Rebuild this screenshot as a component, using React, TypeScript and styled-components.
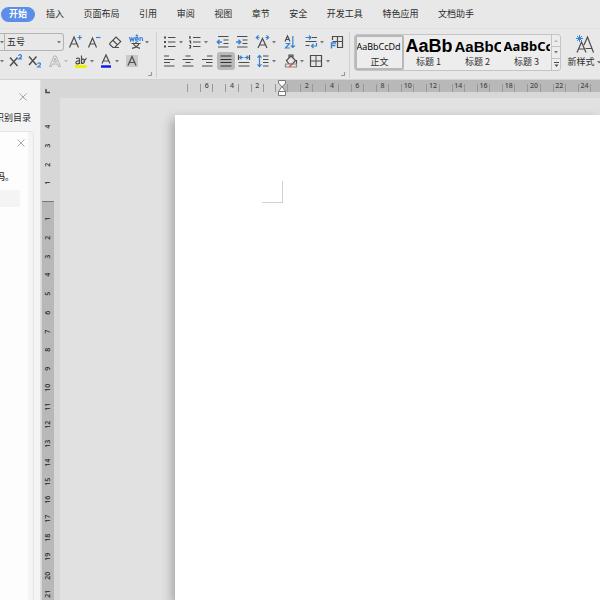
import React from "react";
import styled, { createGlobalStyle, css } from "styled-components";

const INK = "#4c4c4c";
const BLUE = "#3583d6";
const CHROME = "#e8e8e8";

const GlobalStyle = createGlobalStyle`
  * { box-sizing: border-box; }
  body {
    margin: 0;
    overflow: hidden;
    background: ${CHROME};
    color: #2c2c2c;
    font: 9px/12px "Noto Sans CJK SC", "Noto Sans", sans-serif;
  }
  button, select { font: inherit; color: inherit; }
`;

const Window = styled.div`
  display: flex;
  flex-direction: column;
  height: 100vh;
`;

const plainButton = css`
  border: 0;
  padding: 0;
  background: none;
  cursor: pointer;
  white-space: nowrap;
`;

/* ---------- tab strip ---------- */

const TabStrip = styled.header`
  display: flex;
  align-items: center;
  flex: none;
  height: 28px;
  padding-left: 1px;
`;

const ActiveTab = styled.button`
  ${plainButton}
  flex: none;
  width: 34px;
  height: 15px;
  margin-right: 11px;
  border-radius: 8px;
  background: #5b8ee8;
  color: #fff;
  font-weight: 700;
`;

const TabList = styled.nav`
  display: flex;
  justify-content: space-between;
  flex: none;
  width: 428px;
`;

const Tab = styled.button`
  ${plainButton}
`;

/* ---------- ribbon ---------- */

const Ribbon = styled.div`
  display: flex;
  flex: none;
  height: 52px;
  border-top: 1px solid #e1e1e1;
  border-bottom: 1px solid #d2d2d2;
  overflow: hidden;
`;

const Group = styled.section<{ $width: number; $inset?: number }>`
  display: flex;
  flex-direction: column;
  flex: none;
  gap: 1px;
  width: ${(p) => p.$width}px;
  padding: 4px 3px 0 ${(p) => p.$inset ?? 0}px;
`;

const Divider = styled.div`
  flex: none;
  width: 1px;
  height: 46px;
  margin-top: 3px;
  background: #d0d0d0;
`;

const ToolRow = styled.div`
  display: flex;
  align-items: center;
  height: 18px;
`;

const Tool = styled.button<{ $gap?: number; $on?: boolean }>`
  ${plainButton}
  display: flex;
  align-items: center;
  justify-content: center;
  flex: none;
  width: ${(p) => (p.$on ? 18 : 16)}px;
  height: 18px;
  margin-left: ${(p) => p.$gap ?? 0}px;
  border-radius: 3px;
  background: ${(p) => (p.$on ? "#b9b9b9" : "none")};
`;

const Drop = styled.button<{ $gap?: number; $narrow?: boolean }>`
  ${plainButton}
  display: flex;
  align-items: center;
  justify-content: center;
  flex: none;
  width: ${(p) => (p.$narrow ? 4 : 6)}px;
  height: 18px;
  margin-left: ${(p) => p.$gap ?? 0}px;
`;

const LauncherRow = styled.div`
  display: flex;
  justify-content: flex-end;
`;

const Launcher = styled.button`
  ${plainButton}
  width: 5px;
  height: 6px;
  display: flex;
`;

const FontName = styled.div`
  flex: none;
  width: 5px;
  height: 18px;
  display: flex;
  align-items: center;
  border: solid #b4b4b4;
  border-width: 1px 1px 1px 0;
`;

const SizeBox = styled.label`
  display: grid;
  flex: none;
  align-items: center;
  width: 59px;
  height: 18px;
  border: 1px solid #b4b4b4;
  border-left: 0;
  border-radius: 0 3px 3px 0;
  > * { grid-area: 1 / 1; }
  > svg { justify-self: end; margin-right: 2px; pointer-events: none; }
`;

const SizeSelect = styled.select`
  appearance: none;
  width: 100%;
  height: 16px;
  padding: 0 0 0 2px;
  border: 0;
  background: none;
`;

/* ---------- style gallery ---------- */

const Gallery = styled.div`
  display: flex;
  flex: none;
  height: 37px;
  margin: 5px 0 0 4px;
  border: 1px solid #c4c4c4;
  border-radius: 3px;
  background: #ededed;
`;

const StyleCard = styled.button<{ $on?: boolean }>`
  ${plainButton}
  display: flex;
  flex-direction: column;
  align-items: center;
  width: 49px;
  height: 35px;
  padding: ${(p) => (p.$on ? 0 : 2)}px;
  border: ${(p) => (p.$on ? "2px solid #b8b8b8" : "0")};
  border-radius: 2px;
`;

const Preview = styled.span<{ $size: number; $bold?: boolean; $face: string }>`
  width: 46px;
  height: 20px;
  overflow: hidden;
  text-align: left;
  color: #000;
  font: ${(p) => (p.$bold ? 700 : 400)} ${(p) => p.$size}px/19px ${(p) => p.$face}, sans-serif;
`;

const GallerySteps = styled.div`
  display: flex;
  flex-direction: column;
  width: 9px;
  border-left: 1px solid #c4c4c4;
`;

const Step = styled.button`
  ${plainButton}
  display: flex;
  align-items: center;
  justify-content: center;
  flex: 1;
  & + & { border-top: 1px solid #c4c4c4; }
`;

const NewStyle = styled.button`
  ${plainButton}
  display: grid;
  grid-template-columns: 28px 8px;
  row-gap: 2px;
  justify-items: center;
  align-items: center;
  align-content: start;
  margin: 5px 0 0 6px;
  > :first-child { grid-column: 1 / 3; }
`;

/* ---------- workspace ---------- */

const Body = styled.div`
  display: flex;
  flex: 1;
  min-height: 0;
`;

const SidePane = styled.aside`
  display: flex;
  flex-direction: column;
  align-items: flex-end;
  flex: none;
  width: 40px;
  overflow: hidden;
  background: #f4f4f4;
`;

const PaneClose = styled.button<{ $card?: boolean }>`
  ${plainButton}
  display: flex;
  flex: none;
  margin: ${(p) => (p.$card ? "7px 3px 0 0" : "13px 13px 0 0")};
`;

const PaneTitle = styled.div`
  flex: none;
  margin: 11px 9px 7px 0;
  white-space: nowrap;
`;

const PaneFrame = styled.div`
  flex: 1;
  width: 60px;
  padding-right: 5px;
  border: 1px solid #e6e6e6;
  border-bottom: 0;
  border-radius: 4px 4px 0 0;
  margin-right: 6px;
`;

const PaneCard = styled.div`
  display: flex;
  flex-direction: column;
  align-items: flex-end;
  height: 100%;
  background: #fdfdfd;
`;

const Message = styled.p`
  margin: 24px 14px 7px 0;
  font-weight: 500;
  white-space: nowrap;
`;

const Placeholder = styled.div`
  width: 50px;
  height: 17px;
  margin-right: 8px;
  border-radius: 3px;
  background: #f4f4f4;
`;

const Workspace = styled.main`
  display: flex;
  flex-direction: column;
  flex: 1;
  min-width: 0;
  border-left: 1px solid #dedede;
  background: #d7d7d7;
`;

const TopRuler = styled.div`
  display: flex;
  flex: none;
  height: 18px;
  overflow: hidden;
  color: #444;
  font: 500 7px/11px "Noto Sans", sans-serif;
`;

const Corner = styled.button`
  ${plainButton}
  display: flex;
  flex: none;
  align-items: center;
  width: 20px;
  height: 18px;
  padding: 4px 0 0 4px;
`;

const MarginBand = styled.div`
  display: flex;
  flex: none;
  justify-content: flex-end;
  width: 221px;
  height: 12px;
`;

const TextBand = styled.div`
  display: flex;
  flex: 1 0 auto;
  height: 12px;
  background: #b8b8b8;
`;

const Scale = styled.div<{ $length: number }>`
  display: flex;
  flex: none;
  width: ${(p) => p.$length}px;
`;

const Unit = styled.span`
  display: flex;
  flex: 1;
  justify-content: space-between;
  width: 0;
  padding: 0 6px;
`;

const Numeral = styled.span`
  display: flex;
  justify-content: center;
  width: 0;
`;

const Tick = styled.i<{ $edge?: boolean }>`
  flex: none;
  width: 1px;
  height: 8px;
  margin: 4px ${(p) => (p.$edge ? 6 : 0)}px 0 ${(p) => (p.$edge ? 5 : 0)}px;
  background: #999;
`;

const IndentMarker = styled.button`
  ${plainButton}
  display: flex;
  flex: none;
  width: 8px;
  height: 17px;
  margin: 0 -4px;
  z-index: 1;
`;

const Stage = styled.div`
  display: flex;
  flex: 1;
  min-height: 0;
`;

const SideRuler = styled.div`
  display: flex;
  flex-direction: column;
  flex: none;
  width: 13px;
  margin-right: 6px;
  padding: 19px 0 0 1px;
  overflow: hidden;
  color: #222;
  font: 500 7px/12px "Noto Sans", sans-serif;
`;

const SideScale = styled.div<{ $length: number; $text?: boolean }>`
  display: flex;
  flex-direction: column;
  flex: none;
  height: ${(p) => p.$length}px;
  ${(p) =>
    p.$text
      ? css`
          margin-top: 9px;
          padding-top: 7px;
          border-top: 1px solid #777;
          background: #b8b8b8;
        `
      : ""}
`;

const SideNumeral = styled.span`
  display: flex;
  align-items: center;
  justify-content: center;
  flex: 1;
  height: 0;
  writing-mode: vertical-rl;
  transform: rotate(180deg);
`;

const Canvas = styled.div`
  display: flex;
  flex: 1;
  min-width: 0;
  padding: 17px 0 0 115px;
  overflow: hidden;
  background: #e1e1e1;
`;

const Page = styled.article`
  flex: 1;
  padding: 66px 0 0 87px;
  background: #fff;
  box-shadow: -3px 4px 10px rgba(0, 0, 0, 0.28);
`;

const MarginCorner = styled.div`
  width: 21px;
  height: 22px;
  border: solid #d0d0d0;
  border-width: 0 1px 1px 0;
`;

/* ---------- icons ---------- */

const Svg = ({ w = 16, h = 16, children }: { w?: number; h?: number; children: React.ReactNode }) => (
  <svg width={w} height={h} viewBox={`0 0 ${w} ${h}`} fill="none" stroke={INK} strokeWidth="1.2" aria-hidden="true">
    {children}
  </svg>
);

const Caret = ({ pale = false }: { pale?: boolean }) => (
  <svg width="4" height="3" viewBox="0 0 4 3" aria-hidden="true">
    <path d="M0 0h4L2 2.6z" fill={pale ? "#bbb" : "#777"} />
  </svg>
);

const icons = {
  grow: (
    <Svg>
      <path d="M2.5 13.5 7 3l4.5 10.500M4 10h6" />
      <path d="M10.5 3.5H15M12.7 1.300v4.400" stroke={BLUE} />
    </Svg>
  ),
  shrink: (
    <Svg>
      <path d="M2.500 13.500 6.500 4l4 9.500M4 10h5" />
      <path d="M10 3.500h4.500" stroke={BLUE} />
    </Svg>
  ),
  eraser: (
    <Svg>
      <path d="M2.800 9.300 9 3l4.700 4.600-6 5.900H6L2.800 10.400zM5.800 6.200l4.800 4.700M7 13.500h5" />
    </Svg>
  ),
  phonetic: (
    <Svg>
      <path
        d="M1.500 3l1.200 4 1.200-3 1.200 3 1.200-4M7.500 5.200h2.800c0-2.800-2.800-2.800-2.800 0 0 2.300 2.200 2.300 2.700 1.400M12 7V3.200M12 5c0-2 2.500-2 2.500 0v2M7.800 2l1-1 1 1"
        stroke={BLUE}
      />
      <path d="M3.500 9.500h9M8 8v1.500M5.500 9.700C6.500 12 9 13.500 12 14.300M10.800 9.700C10 12 7.500 13.500 4 14.300" />
    </Svg>
  ),
  superscript: (
    <Svg>
      <path d="M3 4.500 10.500 13M10.500 4.500 3 13" strokeWidth="1.400" />
      <path d="M11.700 3c0-2 3-1.600 2.800.1-.1 1-1.800 1.600-2.800 2.700H15" stroke={BLUE} />
    </Svg>
  ),
  subscript: (
    <Svg>
      <path d="M3 3.500 10.500 12M10.500 3.500 3 12" strokeWidth="1.400" />
      <path d="M11.700 11.200c0-2 3-1.600 2.800.1-.1 1-1.800 1.600-2.800 2.700H15" stroke={BLUE} />
    </Svg>
  ),
  outlineA: (
    <Svg>
      <path d="M2.500 13.500 7 3h2l4.500 10.500h-2l-1-2.500h-5l-1 2.500zM6.500 9h3L8 5z" stroke="#b5b5b5" strokeWidth="1" />
    </Svg>
  ),
  highlight: (
    <Svg>
      <path d="M3 5.500c3-1 3.500 0 3.500 1.500v4M6.500 8C4 7.700 2.700 8.500 3 10c.4 1.300 2.800 1 3.500-.6M8.500 2.500V11M8.500 7c1-1.500 3-1.300 3 1s-2 3-3 1.600M10.500 9l3-4" />
      <path d="M2 13.500h11.500" stroke="#efef00" strokeWidth="3" />
    </Svg>
  ),
  fontColor: (
    <Svg>
      <path d="M4 10.500 8 2l4 8.500M5.200 8h5.600" />
      <path d="M3 13.500h10" stroke="#1010f0" strokeWidth="2.400" />
    </Svg>
  ),
  shadedA: (
    <Svg>
      <path d="M2 2h12v12H2z" fill="#c9c9c9" stroke="none" />
      <path d="M4 12.500 8 3.500l4 9M5.500 9.500h5" />
    </Svg>
  ),
  bullets: (
    <Svg>
      <path d="M6 3.500h7.500M6 8h7.500M6 12.500h7.500" />
      <path d="M2 3.500h2M2 8h2M2 12.500h2" strokeWidth="2" />
    </Svg>
  ),
  numbering: (
    <Svg>
      <path d="M6 3.500h7.500M6 8h7.500M6 12.500h7.500" />
      <path d="M3 2v3M2 3h1M2 7h1.500v2H4.500M2 11.500h1.500V14H2" />
    </Svg>
  ),
  outdent: (
    <Svg>
      <path d="M3 2.500h10.500M8.500 6h5M8.500 9.500h5M3 13h10.500" />
      <path d="M7 8H2M4.500 5.800 2.300 8l2.200 2.200" stroke={BLUE} strokeWidth="1.400" />
    </Svg>
  ),
  indent: (
    <Svg>
      <path d="M3 2.500h10.500M8.500 6h5M8.500 9.500h5M3 13h10.500" />
      <path d="M2 8h5M4.500 5.800 6.700 8l-2.200 2.200" stroke={BLUE} strokeWidth="1.400" />
    </Svg>
  ),
  scaleA: (
    <Svg>
      <path d="M4 14 8.500 4.500 13 14M5.500 11h6" />
      <path d="M5.500 3.500h-3M4.500 1.300 2.300 3.500l2.200 2.200M11.500 3.500h3M12.500 1.300l2.200 2.200-2.200 2.200" stroke={BLUE} />
    </Svg>
  ),
  sort: (
    <Svg>
      <path d="M3 7.500 5.500 2 8 7.500M4 5.500h3" />
      <path d="M3.500 9.500h4L3.500 14H8M10.800 2v11.500M8.800 11.500l2 2 2-2" stroke={BLUE} />
    </Svg>
  ),
  wrap: (
    <Svg>
      <path d="M9 3.500h5M2.500 7.500h11M2.500 11.500h4" />
      <path d="M2.500 3.500h5M6 1.500l2 2-2 2M13.500 9v3h-5M10.500 10l-2 2 2 2" stroke={BLUE} />
    </Svg>
  ),
  frame: (
    <Svg>
      <path d="M3.500 6V2.500h10v11H8M8.500 2.500v11M3.500 7.500h10" />
      <path d="M2.500 14.500V9H7M2.500 11.500h4" stroke={BLUE} strokeWidth="1.400" />
    </Svg>
  ),
  left: (
    <Svg>
      <path d="M3 3h5M3 6.500h10.500M3 9.500h6M3 13h10.500" />
    </Svg>
  ),
  center: (
    <Svg>
      <path d="M5.500 3h5M2.500 6.500h11M5.500 9.500h5M2.500 13h11" />
    </Svg>
  ),
  right: (
    <Svg>
      <path d="M8 3h5.500M3 6.500h10.500M7 9.500h6.500M3 13h10.500" />
    </Svg>
  ),
  justify: (
    <Svg>
      <path d="M2.500 3h11M2.500 6.500h11M2.500 9.500h11M2.500 13h11" stroke="#333" />
    </Svg>
  ),
  distribute: (
    <Svg>
      <path d="M2.500 2v5M13.500 2v5M2.500 9.500h11M2.500 13h11" />
      <path d="M3.500 4.500h4M5.500 2.800 3.700 4.500l1.800 1.700M8.500 4.500h4M10.500 2.800l1.800 1.700-1.800 1.700" stroke={BLUE} />
    </Svg>
  ),
  spacing: (
    <Svg>
      <path d="M8 3h5.500M8 6.500h5.500M8 9.500h5.500M8 13h5.500" />
      <path d="M4.500 2.500v11M2.500 4.700l2-2.200 2 2.200M2.500 11.300l2 2.200 2-2.200" stroke={BLUE} />
    </Svg>
  ),
  bucket: (
    <Svg>
      <path d="M3.500 7.500 8 3l4.500 4.500-3 3.500H6zM6 5V2h4v3M13.500 7v4" />
      <path d="M5 11H2.500v3h11v-3H10" stroke="#888" />
      <path d="M6 14l4-3.500" stroke="#e04b4b" />
    </Svg>
  ),
  borders: (
    <Svg>
      <path d="M2.500 2.500h11v11h-11z" />
      <path d="M8 2.500v11M2.500 8h11" strokeWidth="1" />
    </Svg>
  ),
  launcher: (
    <Svg w={5} h={6}>
      <path d="M0 4.500h3.500V1" stroke="#999" />
    </Svg>
  ),
  close: (
    <Svg w={8} h={8}>
      <path d="M.5.500l7 7M7.500.500l-7 7" stroke="#a8a8a8" strokeWidth="1" />
    </Svg>
  ),
  newStyle: (
    <Svg w={22} h={20}>
      <path d="M3 18.500 7.500 8 12 18.500M4.500 15h6M10 11l3.500-8 6 15.500M11.500 14.500H18" />
      <path d="M5.500 1v7M2 4.500h7M3 2l5 5M8 2 3 7" stroke={BLUE} strokeWidth="1" />
    </Svg>
  ),
  tabStop: (
    <Svg w={5} h={5}>
      <path d="M1 0v3.500h4" strokeWidth="1.600" />
    </Svg>
  ),
  marker: (
    <Svg w={8} h={17}>
      <path d="M.5.500h7V3L4 7 .5 3z" fill="#fff" stroke="#777" strokeWidth="1" />
      <path d="M.5 11.500 4 6.500l3.500 5v4h-7zM.5 11.500h7" fill="#fff" stroke="#777" strokeWidth="1" />
    </Svg>
  ),
};

type IconName = keyof typeof icons;
type ToolSpec = { icon: IconName; label: string; gap?: number; on?: boolean; drop?: number; pale?: boolean };

const Tools = ({ items }: { items: ToolSpec[] }) => (
  <>
    {items.map((t) => (
      <React.Fragment key={t.icon}>
        <Tool $gap={t.gap} $on={t.on} aria-label={t.label} aria-pressed={t.on}>
          {icons[t.icon]}
        </Tool>
        {t.drop !== undefined && (
          <Drop $gap={t.drop} aria-label={`${t.label}选项`}>
            <Caret pale={t.pale} />
          </Drop>
        )}
      </React.Fragment>
    ))}
  </>
);

const fontTop: ToolSpec[] = [
  { icon: "grow", label: "增大字号", gap: 3 },
  { icon: "shrink", label: "减小字号", gap: 3 },
  { icon: "eraser", label: "清除格式", gap: 5 },
  { icon: "phonetic", label: "拼音指南", gap: 5, drop: 0 },
];
const fontBottom: ToolSpec[] = [
  { icon: "superscript", label: "上标", gap: 3 },
  { icon: "subscript", label: "下标", gap: 3 },
  { icon: "outlineA", label: "文字效果", gap: 5, drop: 0, pale: true },
  { icon: "highlight", label: "突出显示", gap: 4, drop: 0 },
  { icon: "fontColor", label: "字体颜色", gap: 3, drop: 0 },
  { icon: "shadedA", label: "字符底纹", gap: 4 },
];
const paraTop: ToolSpec[] = [
  { icon: "bullets", label: "项目符号", gap: 1, drop: 0 },
  { icon: "numbering", label: "编号", gap: 3, drop: 0 },
  { icon: "outdent", label: "减少缩进量", gap: 6 },
  { icon: "indent", label: "增加缩进量", gap: 3 },
  { icon: "scaleA", label: "中文版式", gap: 4, drop: 1 },
  { icon: "sort", label: "排序", gap: 5 },
  { icon: "wrap", label: "显示编辑标记", gap: 5, drop: 0 },
  { icon: "frame", label: "制表位", gap: 4 },
];
const paraBottom: ToolSpec[] = [
  { icon: "left", label: "左对齐" },
  { icon: "center", label: "居中对齐", gap: 3 },
  { icon: "right", label: "右对齐", gap: 3 },
  { icon: "justify", label: "两端对齐", gap: 2, on: true },
  { icon: "distribute", label: "分散对齐", gap: 1 },
  { icon: "spacing", label: "行距", gap: 3, drop: 0 },
  { icon: "bucket", label: "底纹颜色", gap: 6, drop: 0 },
  { icon: "borders", label: "边框", gap: 3, drop: 1 },
];

const tabs = ["插入", "页面布局", "引用", "审阅", "视图", "章节", "安全", "开发工具", "特色应用", "文档助手"];

const cards = [
  { name: "正文", text: "AaBbCcDd", size: 9, bold: false, face: '"Open Sans"' },
  { name: "标题 1", text: "AaBb", size: 18, bold: true, face: '"Liberation Sans"' },
  { name: "标题 2", text: "AaBbC", size: 15, bold: true, face: '"Liberation Sans"' },
  { name: "标题 3", text: "AaBbCc", size: 13, bold: true, face: '"Noto Sans"' },
];

const Units = ({ values }: { values: number[] }) => (
  <>
    {values.map((n) => (
      <Unit key={n}>
        <Tick />
        <Numeral>{n}</Numeral>
        <Tick />
      </Unit>
    ))}
  </>
);

const range = (count: number, step = 1) => Array.from({ length: count }, (_, i) => (i + 1) * step);

export default function App() {
  return (
    <Window>
      <GlobalStyle />
      <TabStrip>
        <ActiveTab>开始</ActiveTab>
        <TabList>
          {tabs.map((t) => (
            <Tab key={t}>{t}</Tab>
          ))}
        </TabList>
      </TabStrip>

      <Ribbon>
        <Group $width={156}>
          <ToolRow>
            <FontName>
              <Caret />
            </FontName>
            <SizeBox>
              <SizeSelect aria-label="字号" defaultValue="五号">
                <option>五号</option>
                <option>四号</option>
              </SizeSelect>
              <Caret />
            </SizeBox>
            <Tools items={fontTop} />
          </ToolRow>
          <ToolRow>
            <Drop $narrow aria-label="删除线选项">
              <Caret />
            </Drop>
            <Tools items={fontBottom} />
          </ToolRow>
          <LauncherRow>
            <Launcher aria-label="字体设置">{icons.launcher}</Launcher>
          </LauncherRow>
        </Group>
        <Divider />
        <Group $width={192} $inset={4}>
          <ToolRow>
            <Tools items={paraTop} />
          </ToolRow>
          <ToolRow>
            <Tools items={paraBottom} />
          </ToolRow>
          <LauncherRow>
            <Launcher aria-label="段落设置">{icons.launcher}</Launcher>
          </LauncherRow>
        </Group>
        <Divider />
        <Gallery>
          {cards.map((c, i) => (
            <StyleCard key={c.name} $on={i === 0}>
              <Preview $size={c.size} $bold={c.bold} $face={c.face}>
                {c.text}
              </Preview>
              {c.name}
            </StyleCard>
          ))}
          <GallerySteps>
            <Step aria-label="上一行">
              <Svg w={4} h={3}>
                <path d="M0 3h4L2 .4z" fill="#bbb" stroke="none" />
              </Svg>
            </Step>
            <Step aria-label="下一行">
              <Caret />
            </Step>
            <Step aria-label="更多样式">
              <Svg w={5} h={6}>
                <path d="M0 .5h5" strokeWidth="1" />
                <path d="M.5 2.500h4L2.500 5z" fill={INK} stroke="none" />
              </Svg>
            </Step>
          </GallerySteps>
        </Gallery>
        <NewStyle>
          {icons.newStyle}
          <span>新样式</span>
          <Caret />
        </NewStyle>
      </Ribbon>

      <Body>
        <SidePane>
          <PaneClose aria-label="关闭窗格">{icons.close}</PaneClose>
          <PaneTitle>识别目录</PaneTitle>
          <PaneFrame>
            <PaneCard>
              <PaneClose $card aria-label="关闭提示">
                {icons.close}
              </PaneClose>
              <Message>吗。</Message>
              <Placeholder />
            </PaneCard>
          </PaneFrame>
        </SidePane>

        <Workspace>
          <TopRuler>
            <Corner aria-label="制表符">{icons.tabStop}</Corner>
            <MarginBand>
              <Tick $edge />
              <Scale $length={76}>
                <Units values={[6, 4, 2]} />
              </Scale>
              <Tick $edge />
            </MarginBand>
            <IndentMarker aria-label="首行缩进">{icons.marker}</IndentMarker>
            <TextBand>
              <Tick $edge />
              <Scale $length={404}>
                <Units values={range(16, 2)} />
              </Scale>
            </TextBand>
          </TopRuler>
          <Stage>
            <SideRuler>
              <SideScale $length={75}>
                {[4, 3, 2, 1].map((n) => (
                  <SideNumeral key={n}>{n}</SideNumeral>
                ))}
              </SideScale>
              <SideScale $length={571} $text>
                {range(30).map((n) => (
                  <SideNumeral key={n}>{n}</SideNumeral>
                ))}
              </SideScale>
            </SideRuler>
            <Canvas>
              <Page>
                <MarginCorner />
              </Page>
            </Canvas>
          </Stage>
        </Workspace>
      </Body>
    </Window>
  );
}
